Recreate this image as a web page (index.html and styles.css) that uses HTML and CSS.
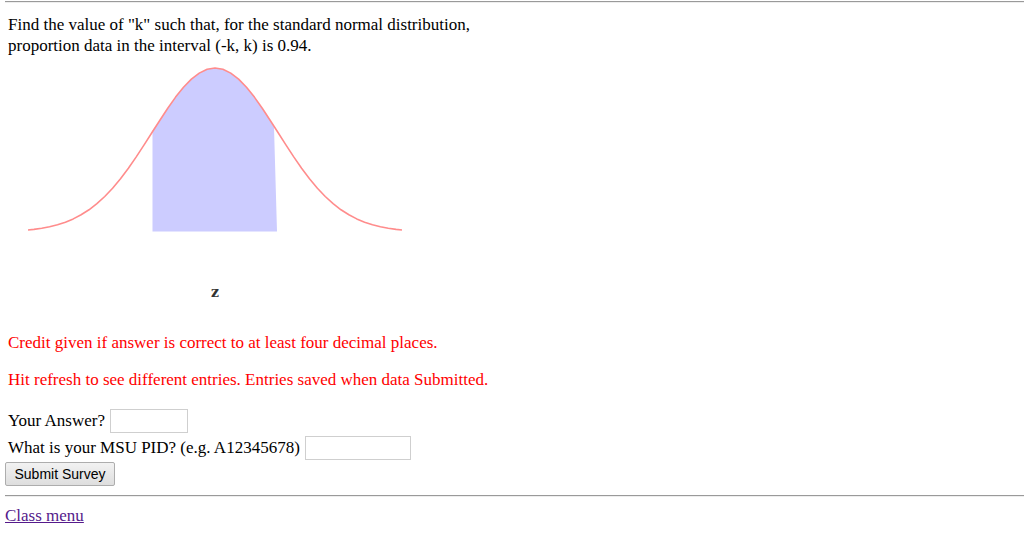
FILE: index.html
```html
<!DOCTYPE html>
<html>
<head>
<meta charset="utf-8">
<title>Survey</title>
<link rel="stylesheet" href="styles.css">
</head>
<body>
<hr class="rule rule-top">
<div class="question">Find the value of "k" such that, for the standard normal distribution,<br>proportion data in the interval (-k, k) is 0.94.</div>
<div class="graph">
<svg class="curve" width="420" height="250" viewBox="5 55 420 250" xmlns="http://www.w3.org/2000/svg">
<polygon class="shade" points="152.5,229.5 152.5,128.5 159.9,118.2 167.75,106.2 175.6,95.1 183.5,85.3 191.4,77.1 199.25,71.1 207.1,67.3 215,66 222.9,67.3 230.75,71.1 238.6,77.1 246.5,85.3 254.4,95.1 262.25,106.2 270.1,118.2 274,125.5 277,229.5"/>
<polyline class="line" points="28,228 33.9,227.4 41.75,226.3 49.6,224.8 57.5,222.8 65.4,220.2 73.25,216.9 81.1,212.8 89,207.8 96.9,201.7 104.75,194.5 112.6,186.2 120.5,176.7 128.4,166.3 136.25,154.9 144.1,142.9 152,130.5 159.9,118.2 167.75,106.2 175.6,95.1 183.5,85.3 191.4,77.1 199.25,71.1 207.1,67.3 215,66 222.9,67.3 230.75,71.1 238.6,77.1 246.5,85.3 254.4,95.1 262.25,106.2 270.1,118.2 278,130.5 285.9,142.9 293.75,154.9 301.6,166.3 309.5,176.7 317.4,186.2 325.25,194.5 333.1,201.7 341,207.8 348.9,212.8 356.75,216.9 364.6,220.2 372.5,222.8 380.4,224.8 388.25,226.3 396.1,227.4 402,228"/>
<text class="zlabel" x="215" y="295" text-anchor="middle">z</text>
</svg>
</div>
<p class="note note-first">Credit given if answer is correct to at least four decimal places.</p>
<p class="note note-second">Hit refresh to see different entries. Entries saved when data Submitted.</p>
<form class="survey">
<div class="row row-answer"><span class="label">Your Answer?</span><input class="field field-answer" type="text"></div>
<div class="row row-pid"><span class="label">What is your MSU PID? (e.g. A12345678)</span><input class="field field-pid" type="text"></div>
<div class="row row-submit"><button class="submit" type="button">Submit Survey</button></div>
</form>
<hr class="rule rule-bottom">
<div class="links"><a class="menu-link" href="#menu">Class menu</a></div>
</body>
</html>
```
FILE: styles.css
```css
html, body {
  background: #ffffff;
}
body {
  margin: 0 0 0 5px;
  font-family: "Liberation Serif", "Times New Roman", serif;
  font-size: 17px;
  color: #000000;
}
.rule {
  border: 0;
  border-top: 1px solid #9a9a9a;
  border-bottom: 1px solid #eeeeee;
  height: 0;
  margin: 0;
}
.rule-top {
  margin-top: 1px;
}
.question {
  padding: 11px 0 0 3px;
  line-height: 21px;
}
.graph {
  height: 250px;
  margin-top: 1px;
}
.curve {
  display: block;
}
.shade {
  fill: #ccccff;
}
.line {
  fill: none;
  stroke: #ff8c8c;
  stroke-width: 1.6;
  stroke-linejoin: round;
}
.zlabel {
  font-family: "DejaVu Serif", "Liberation Serif", serif;
  font-size: 14px;
  font-weight: bold;
  fill: #333333;
}
.note {
  color: #ff0000;
  margin: 0;
  padding-left: 3px;
  line-height: 18px;
}
.note-first {
  margin-top: 27px;
}
.note-second {
  margin-top: 19px;
}
.survey {
  margin: 18px 0 0 0;
}
.row {
  display: flex;
  align-items: center;
}
.row-answer, .row-pid {
  height: 27px;
  padding-left: 3px;
}
.label {
  margin-right: 5px;
}
.field {
  box-sizing: border-box;
  height: 24px;
  border: 1px solid #cfcfcf;
  padding: 1px 2px;
  font-family: "Liberation Sans", Arial, sans-serif;
  font-size: 13px;
  background: #ffffff;
}
.field-answer {
  width: 78px;
}
.field-pid {
  width: 106px;
}
.row-submit {
  height: 26px;
}
.submit {
  box-sizing: border-box;
  width: 110px;
  height: 24px;
  padding: 0 6px;
  font-family: "Liberation Sans", Arial, sans-serif;
  font-size: 14px;
  color: #000000;
  border: 1px solid #adadad;
  border-radius: 2px;
  background: linear-gradient(#f2f2f2, #dedede);
}
.rule-bottom {
  margin-top: 8px;
}
.links {
  padding-top: 10px;
  line-height: 18px;
}
.menu-link {
  color: #551a8b;
  text-decoration: underline;
}
```
